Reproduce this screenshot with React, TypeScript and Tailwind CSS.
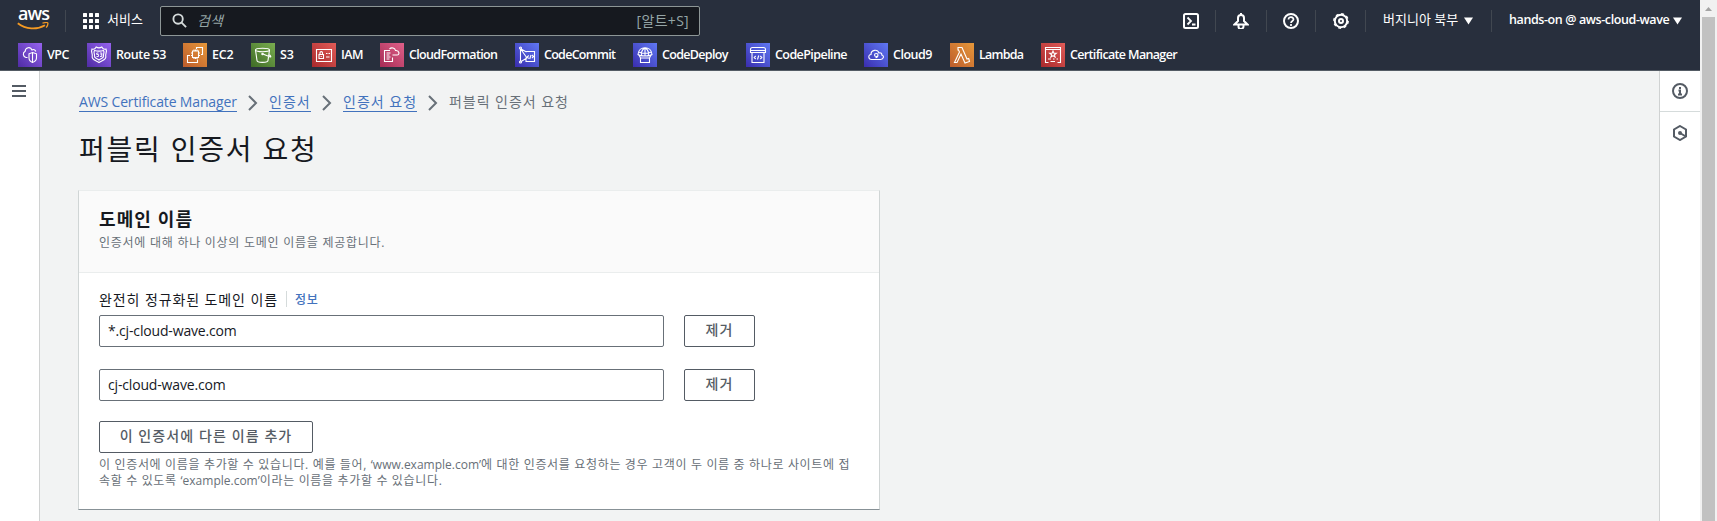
import React from 'react';

type Kids = { children?: React.ReactNode };
const stroke = { fill: 'none', stroke: 'currentColor', strokeWidth: 2 } as const;

const glyphs: Record<string, React.ReactNode> = {
  vpc: (<><path d="M9.500 14.500H8a3.300 3.300 0 0 1-.8-6.200C7.200 4.500 12.500 3 14 7c1.500-1 3.200-.3 3.800 1.500" /><path d="M14.500 9.500l4 1.300v4c0 2.200-1.500 3.900-4 4.700-2.200-.8-3.500-2.500-3.500-4.700v-4z" /><path d="M14.500 9.500v10" /></>),
  route: (<><path d="M5 6c2 .7 3.500-.6 4.200-2 1.800 1.200 3.800 1.200 5.600 0C15.500 5.400 17 6.700 19 6c1.500 3-1 4.500-.2 7.500.6 3.500-3.300 3.600-6.800 6-3.500-2.400-7.400-2.500-6.800-6C6 10.500 3.500 9 5 6z" /><path d="M7.500 7.500c3 .8 6 .8 9 0 1.500 2-.5 3.500 0 5.500.3 2.500-2 2-4.500 4-2.500-2-4.800-1.500-4.500-4 .5-2-1.500-3.500 0-5.500z" /><path d="M11.500 10H9.700v1.500h1.800v2H9.500M13 10h1.800v3.500H13M13.500 11.700h1.300" strokeWidth=".9" /></>),
  ec2: (<><path d="M13.500 6V4.500h6v7H18M10.500 19.500h-6v-7H7M14.500 16.500v3h-4M9.500 8h6v6.500h-6z" /><path d="M11 8V6.500M12.500 8V6.500M14 8V6.500M11 14.500V16M12.500 14.500V16M14 14.500V16M9.500 10H8M9.500 12.500H8M15.500 10H17M15.500 12.500H17" /></>),
  s3: (<><ellipse cx="11.500" cy="7" rx="7" ry="1.700" /><path d="M4.500 7L6 17.500c0 2.500 11 2.500 11 0L18.500 7M12 11l6 2.500c2.500 1.200 2.500-.6-.5-2.200" /><circle cx="11.500" cy="11" r=".7" /></>),
  iam: (<><path d="M4.500 6.500h15v12h-15zM7 11.500h4.500v4H7zM8 11.500V9.700c0-1.500 2.500-1.500 2.500 0v1.800M14 10.500h1.500M16.500 10.500H18M14 14h3.500M9.200 13v1" /></>),
  cloudformation: (<><path d="M10 7.500H4.500v11h8v-4M6.500 10h4M6.500 12h3M6.500 14h4M6.500 16h3M9.500 6c2-2 5.500-1 6 1.500 4-.5 4.500 4.500 1.500 4.500h-4.500" /></>),
  codecommit: (<><path d="M5.500 6v12M6 6l5.500 3M6 18.500L12 15M6 6.500L12 15M11 8.500h8.500v10H11v-4M13.700 12.500l-1.500 1.500 1.500 1.500M17 12l1.500 1.500L17 15M16 12l-1.300 4" /><circle cx="5.500" cy="5" r="1" /><circle cx="5.500" cy="19" r="1" /></>),
  codedeploy: (<><path d="M5 11.500C5.500 2.500 18.500 2.500 19 11.500c-2.500 2-11.500 2-14 0zM5.500 9c4 1.500 9 1.500 13 0M12 5v8M12 5c-4 2-4 6-3 8M12 5c4 2 4 6 3 8M6 12l1.500 3h9l1.500-3M7.500 15v4.500h9V15" /></>),
  codepipeline: (<><path d="M6.500 4.500h11c1.500 0 2 1 2 2v3h-15v-3c0-1 .5-2 2-2zM4.500 7.500h15M6 9.500v10h12v-10M9.700 13l-1.500 1.500L9.700 16M14.300 13l1.500 1.500-1.500 1.500M12.700 12.500l-1.200 4" /></>),
  cloud9: (<><path d="M7.500 16.500C4 16.500 4 11.500 7 11.500c0-5 6.500-5.500 8-1.500 2-.8 3 .8 2.800 2 2.700.6 2 4.500-1.300 4.500zM14 12c0-2-3.500-2-3.500 0s3.500 2 3.500 0c0 1.500-.5 2.500-2.500 2.700" /></>),
  lambda: (<><path d="M8 4.500h4l5 11.500 1.700-.5.8 3-4.500 1.500-4-9-4 8.500H4.500l5-10.500-1-2H8z" /></>),
  cert: (<><path d="M7.500 19.500h-3v-15h15v15h-3M4.500 6.500h15M12 8l.9 2.200 2.400.1-1.900 1.500.7 2.200-2.100-1.300-2.100 1.300.7-2.200-1.900-1.500 2.400-.1zM7 16h3M12 16h1.500M15.500 16H17M9.500 18.500H14" /></>),
};

const Glyph = ({ name, bg }: { name: string; bg: string }) => (
  <span className={`h-6 w-6 shrink-0 bg-linear-to-tr ${bg}`}>
    <svg viewBox="0 0 24 24" className="h-6 w-6" fill="none" stroke="#fff" strokeWidth="1.1">{glyphs[name]}</svg>
  </span>
);

const violet = 'from-[#4f2ba4] to-[#9763ef]';
const orange = 'from-[#bd5c2c] to-[#e6983a]';
const red = 'from-[#a8282c] to-[#e25c58]';
const blue = 'from-[#3a2cae] to-[#6078f4]';

const services = [
  { label: 'VPC', icon: 'vpc', bg: violet, w: 'w-[69px]', t: 'tracking-[-0.5px]' },
  { label: 'Route 53', icon: 'route', bg: violet, w: 'w-[96px]', t: 'tracking-[-0.4px]' },
  { label: 'EC2', icon: 'ec2', bg: orange, w: 'w-[68px]', t: 'tracking-[-0.2px]' },
  { label: 'S3', icon: 's3', bg: 'from-[#3f6b26] to-[#7aae50]', w: 'w-[61px]', t: 'tracking-[-0.1px]' },
  { label: 'IAM', icon: 'iam', bg: red, w: 'w-[68px]', t: 'tracking-[-0.5px]' },
  { label: 'CloudFormation', icon: 'cloudformation', bg: 'from-[#a52b55] to-[#e0608a]', w: 'w-[135px]', t: 'tracking-[-0.67px]' },
  { label: 'CodeCommit', icon: 'codecommit', bg: blue, w: 'w-[118px]', t: 'tracking-[-0.72px]' },
  { label: 'CodeDeploy', icon: 'codedeploy', bg: blue, w: 'w-[113px]', t: 'tracking-[-0.68px]' },
  { label: 'CodePipeline', icon: 'codepipeline', bg: blue, w: 'w-[118px]', t: 'tracking-[-0.57px]' },
  { label: 'Cloud9', icon: 'cloud9', bg: blue, w: 'w-[86px]', t: 'tracking-[-0.48px]' },
  { label: 'Lambda', icon: 'lambda', bg: orange, w: 'w-[91px]', t: 'tracking-[-0.75px]' },
  { label: 'Certificate Manager', icon: 'cert', bg: red, w: 'w-[150px]', t: 'tracking-[-0.65px]' },
];

const Sep = () => <span className="h-[22px] w-px shrink-0 bg-[#414750]" />;
const Caret = () => <svg viewBox="0 0 9 8" className="h-2 w-[9px] shrink-0"><path d="M0 .5h9L4.500 7.500z" fill="#fff" /></svg>;

const AwsLogo = () => (
  <div className="flex h-[41px] w-8 shrink-0 flex-col">
    <span className="h-[22px] pl-px text-[18px] leading-[26px] font-semibold tracking-[-0.9px] text-white">aws</span>
    <svg viewBox="0 14 32 8" className="h-2 w-8 shrink-0">
      <path d="M.8 15.200c8 6.300 19 6.800 27.200 2" fill="none" stroke="#f59a23" strokeWidth="1.800" />
      <path d="M25.500 15.200c3-.8 5-.7 5.300-.2.300 1-.3 3-1.600 4.700" fill="none" stroke="#f59a23" strokeWidth="1.300" />
    </svg>
  </div>
);

const Tool = ({ children, w }: Kids & { w: string }) => (
  <><span className={`flex justify-center ${w}`}><svg viewBox="0 0 16 16" className="h-4 w-4 text-white" {...stroke}>{children}</svg></span><Sep /></>
);

const TopBar = () => (
  <div className="flex h-[41px] items-center pl-[17px] text-[13px] text-white">
    <AwsLogo />
    <span className="ml-4 flex"><Sep /></span>
    <svg viewBox="0 0 16 16" className="ml-[17px] h-4 w-4" fill="#fff">
      {[0, 6, 12].map((y) => [0, 6, 12].map((x) => <rect key={`${x}-${y}`} x={x} y={y} width="4" height="4" rx=".5" />))}
    </svg>
    <span className="ml-2 w-[53px] pb-0.5 whitespace-nowrap text-[13px]">서비스</span>
    <div className="flex h-[30px] w-[540px] items-center rounded-xs border border-[#8d9696] bg-[#16191f] pr-2.5 pl-[11px] text-[14px] text-[#95a5a6]">
      <svg viewBox="0 0 16 16" className="h-[15px] w-[15px] text-[#d5dbdb]" {...stroke}><circle cx="6.500" cy="6.500" r="5" /><path d="M10 10l5 5" /></svg>
      <span className="ml-2.5 italic">검색</span>
      <span className="ml-auto tracking-[0.3px]">[알트+S]</span>
    </div>
    <div className="ml-[466px] flex items-center">
      <Tool w="w-[49px]"><rect x="1" y="1" width="14" height="14" rx="1.500" /><path d="M4.500 4.500L8 8l-3.500 3.500M9 11.500h3.500" strokeWidth="1.800" /></Tool>
      <Tool w="w-[50px]"><path d="M1.500 11.500h13L11 8V5a3 3 0 0 0-6 0v3zM8 0v2M5.500 12v1.500a2 2 0 0 0 5 0V12" /></Tool>
      <Tool w="w-12"><circle cx="8" cy="8" r="7" /><path d="M5.500 6.500c0-3.500 5-3 5 0C10.500 8 8 8 8 10M8 11v2" strokeWidth="1.700" /></Tool>
      <Tool w="w-[49px]"><circle cx="8" cy="8" r="6.200" /><circle cx="8" cy="8" r="7.200" strokeWidth="1.400" strokeDasharray="2.800 2.850" /><circle cx="8" cy="8" r="2" /></Tool>
      <span className="ml-[17px] w-[77px] pb-0.5 whitespace-nowrap text-[13px]">버지니아 북부</span>
      <span className="ml-1 mr-[18px] flex"><Caret /></span>
      <Sep />
      <span className="ml-[17px] w-40 whitespace-nowrap text-[12.500px] font-semibold tracking-[-0.4px]">hands-on @ aws-cloud-wave</span>
      <span className="ml-1 flex"><Caret /></span>
    </div>
  </div>
);

const ServiceBar = () => (
  <div className="flex h-[29px] items-start pl-[18px] pt-[2px] text-[12.500px] font-semibold text-white">
    {services.map((s) => (
      <span key={s.label} className={`flex h-6 shrink-0 items-center gap-[5px] whitespace-nowrap ${s.w}`}>
        <Glyph name={s.icon} bg={s.bg} />
        <span className={s.t}>{s.label}</span>
      </span>
    ))}
  </div>
);

const Chevron = () => (
  <svg viewBox="0 0 10 16" className="mx-[11px] h-4 w-2.5 shrink-0 text-[#687078]" {...stroke}><path d="M1 1l7 7-7 7" /></svg>
);
const Crumb = ({ w, children }: Kids & { w: string }) => (
  <a className={`flex h-[19px] items-center whitespace-nowrap border-b border-[#4272bd] pb-0.5 text-[#4272bd] ${w}`}>{children}</a>
);

const Field = ({ value }: { value: string }) => (
  <div className="flex h-8 gap-5">
    <div className="flex w-[565px] items-center rounded-xs border border-[#687078] px-2 pb-px text-[14px] tracking-[-0.16px] text-[#16191f]">{value}</div>
    <button className="w-[71px] rounded-xs border border-[#545b64] pb-1 text-[14px] font-medium tracking-[1px] text-[#545b64]">제거</button>
  </div>
);

const Latin = ({ children }: Kids) => <span className="tracking-normal">{children}</span>;

const Card = () => (
  <section className="mt-6 h-[320px] w-[802px] border-x border-b border-t border-x-[#d0d5d5] border-b-[#879196] border-t-[#eaeded] bg-white">
    <header className="h-[82px] border-b border-[#eaeded] bg-[#fafafa] pt-[17px] pl-5">
      <h2 className="text-[18px] leading-[22px] font-bold tracking-[1.1px] text-[#16191f]">도메인 이름</h2>
      <p className="mt-[5px] text-[12px] leading-4 tracking-[0.74px] text-[#687078]">인증서에 대해 하나 이상의 도메인 이름을 제공합니다.</p>
    </header>
    <div className="px-5 pt-[15px]">
      <div className="flex h-[22px] items-center text-[14px] text-[#16191f]">
        <span className="w-[179px] whitespace-nowrap tracking-[0.9px]">완전히 정규화된 도메인 이름</span>
        <span className="ml-2 h-4 w-px bg-[#d5dbdb]" />
        <a className="ml-2 pt-0.5 text-[12px] font-medium tracking-[0.8px] text-[#4272bd]">정보</a>
      </div>
      <div className="mt-[5px] flex flex-col gap-[22px]">
        <Field value="*.cj-cloud-wave.com" />
        <Field value="cj-cloud-wave.com" />
      </div>
      <button className="mt-5 h-8 w-[214px] rounded-xs border border-[#545b64] pb-1 text-[14px] font-medium tracking-[1.1px] whitespace-nowrap text-[#545b64]">이 인증서에 다른 이름 추가</button>
      <p className="mt-1 text-[12px] leading-4 tracking-[0.66px] whitespace-nowrap text-[#687078]">
        이 인증서에 이름을 추가할 수 있습니다. 예를 들어, <Latin>‘www.example.com’</Latin>에 대한 인증서를 요청하는 경우 고객이 두 이름 중 하나로 사이트에 접<br />
        속할 수 있도록 <Latin>‘example.com’</Latin>이라는 이름을 추가할 수 있습니다.
      </p>
    </div>
  </section>
);

export default function App() {
  return (
    <div className="flex h-[521px] w-[1717px] overflow-hidden bg-[#f2f3f3] font-['Open_Sans','Noto_Sans_CJK_KR',sans-serif]">
      <div className="flex w-[1700px] flex-col">
        <nav className="h-[71px] shrink-0 border-b border-[#545b64] bg-[#282f3d]"><TopBar /><ServiceBar /></nav>
        <div className="flex flex-1">
          <aside className="w-10 border-r border-[#d0d2d2] bg-white pt-3.5 pl-3">
            <svg viewBox="0 0 14 12" className="h-3 w-3.5 text-[#545b64]" {...stroke}><path d="M0 1h14M0 6h14M0 11h14" /></svg>
          </aside>
          <main className="flex-1 pt-[22px] pl-[38px]">
            <div className="flex h-[19px] items-center pl-px text-[14px] text-[#687078]">
              <Crumb w="w-[158px] tracking-[-0.15px]">AWS Certificate Manager</Crumb>
              <Chevron />
              <Crumb w="w-[42px] tracking-[1px]">인증서</Crumb>
              <Chevron />
              <Crumb w="w-[74px] tracking-[1px]">인증서 요청</Crumb>
              <Chevron />
              <span className="pb-[3px] whitespace-nowrap tracking-[0.95px]">퍼블릭 인증서 요청</span>
            </div>
            <h1 className="mt-[18px] h-[36px] pl-px text-[28px] leading-[38px] tracking-[1.8px] whitespace-nowrap text-[#16191f]">퍼블릭 인증서 요청</h1>
            <Card />
          </main>
          <aside className="w-[41px] border-l border-[#d0d2d2] bg-white text-[#545b64]">
            <div className="flex h-[41px] items-center justify-center border-b border-[#d5dbdb]">
              <svg viewBox="0 0 16 16" className="h-4 w-4" {...stroke}><circle cx="8" cy="8" r="7" /><path d="M8 4v2M6.500 7.500H8V11M6 11.500h4" /></svg>
            </div>
            <div className="flex h-[42px] items-center justify-center">
              <svg viewBox="0 0 16 16" className="h-4 w-4" {...stroke}><path d="M8 1l6 3.500v7L8 15l-6-3.500v-7zM8 8l5 3" /><circle cx="8" cy="8" r="1" fill="currentColor" /></svg>
            </div>
          </aside>
        </div>
      </div>
      <div className="flex w-[17px] flex-col items-center bg-[#f1f1f1]">
        <svg viewBox="0 0 17 17" className="h-[17px] w-[17px]"><path d="M5 11h7L8.500 7z" fill="#a3a3a3" /></svg>
        <div className="w-[13px] flex-1 bg-[#c1c1c1]" />
      </div>
    </div>
  );
}
